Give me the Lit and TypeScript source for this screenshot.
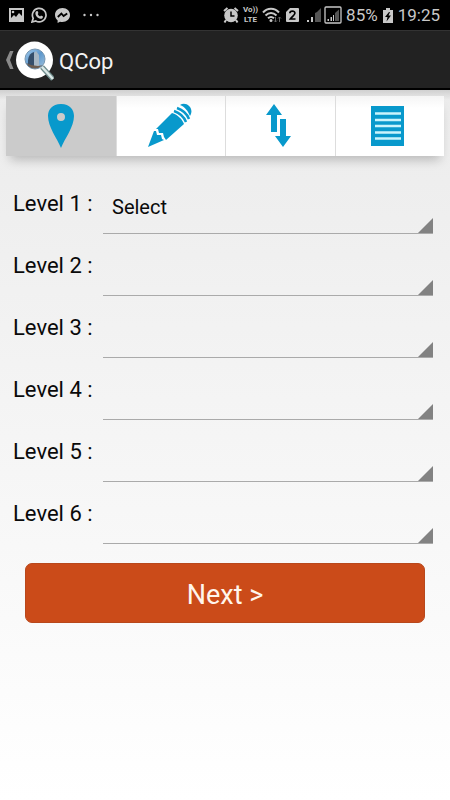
import { LitElement, html, css, svg } from "lit";
import { customElement, state } from "lit/decorators.js";
import { classMap } from "lit/directives/class-map.js";

@customElement("status-bar")
class StatusBar extends LitElement {
  static styles = css`
    :host {
      display: flex;
      align-items: center;
      justify-content: space-between;
      height: 30px;
      padding: 0 10px 0 8px;
      background: #000;
      color: #c8c8c8;
      font: 17px/30px Roboto, sans-serif;
    }
    .group { display: flex; align-items: center; gap: 4px; }
    .left { gap: 7px; }
    svg { display: block; flex: none; }
    .dots { margin-left: 4px; }
    .signal { margin-left: 3px; }
    .boxed { margin-left: -2px; }
    .network { font: bold 8px/10px Roboto, sans-serif; text-align: center; }
    .network span { display: block; }
  `;

  render() {
    return html`
      <div class="group left">
        <svg width="16" height="16" viewBox="0 0 16 16">
          <path fill="#c8c8c8" fill-rule="evenodd" d="M1 1H16V15H1ZM3 3V11L6 8L8 10L11 6L14 9V3Z" />
          <circle cx="5" cy="5" r="1.3" fill="#c8c8c8" />
        </svg>
        <svg width="16" height="16" viewBox="0 0 16 16">
          <path fill="none" stroke="#c8c8c8" stroke-width="1.7" d="M1 15L2.2 11.3A6.8 6.8 0 1 1 4.8 14Z" />
          <path fill="#c8c8c8" d="M5.4 4.2L6.6 4L7.4 6L6.7 7C7.2 8.2 8 8.9 9.1 9.4L10 8.5L12 9.5C12 11.2 10.8 12 9.5 11.8C6.5 11.3 4.4 8.6 4.4 6.2C4.4 5.4 4.7 4.6 5.4 4.2Z" />
        </svg>
        <svg width="17" height="17" viewBox="0 0 17 17">
          <path fill="#c8c8c8" d="M8.5 1C4 1 1 4.2 1 8C1 10.2 2 12 3.6 13.3V16L6 14.7C11.5 16 16 12.5 16 8C16 4.2 13 1 8.5 1Z" />
          <path fill="none" stroke="#000" stroke-width="1.8" d="M3.8 10L7.4 6.6L9.6 9L13.2 6.4" />
        </svg>
        <svg class="dots" width="18" height="16" viewBox="0 0 18 16" fill="#c8c8c8">
          <circle cx="2.5" cy="8" r="1.2" /><circle cx="9" cy="8" r="1.2" /><circle cx="15.5" cy="8" r="1.2" />
        </svg>
      </div>
      <div class="group">
        <svg width="16" height="17" viewBox="0 0 16 17">
          <circle cx="8" cy="8.5" r="6.8" fill="#c8c8c8" />
          <path fill="none" stroke="#c8c8c8" stroke-width="2" d="M1 4L4.5 1M11.5 1L15 4M3 13L1.5 15.5M13 13L14.5 15.5" />
          <path fill="none" stroke="#000" stroke-width="1.5" d="M8 4.5V9H11.5" />
        </svg>
        <div class="network"><span>Vo))</span><span>LTE</span></div>
        <svg width="20" height="16" viewBox="0 0 20 16">
          <path fill="none" stroke="#c8c8c8" stroke-width="2" d="M1 5.5C5.5 .5 12.5 .5 17 5.5M3.5 8.5C7 5 11 5 14.5 8.5M6 11.3C8 9.5 10 9.5 12 11.3" />
          <circle cx="9" cy="13.5" r="1.5" fill="#c8c8c8" />
          <path fill="none" stroke="#666" d="M13.5 10V15M12 13.5L13.5 15L15 13.5M17.5 15V10M16 11.5L17.5 10L19 11.5" />
        </svg>
        <svg width="13" height="16" viewBox="0 0 13 16">
          <path fill="#c8c8c8" d="M4 1H12Q13 1 13 2V14Q13 15 12 15H1Q0 15 0 14V5Z" />
          <path fill="none" stroke="#000" stroke-width="1.7" d="M3.8 6.3C4 3.3 9 3.5 8.9 6.2C8.8 8 6 9.5 4.3 12H9.5" />
        </svg>
        <svg class="signal" width="16" height="16" viewBox="0 0 16 16">
          <path fill="#c8c8c8" d="M1 13H3V15H1ZM5 10H7V15H5Z" />
          <path fill="#555" d="M9 6L11 5V15H9ZM11 5L15 1V15H11Z" />
        </svg>
        <svg class="boxed" width="18" height="18" viewBox="0 0 18 18">
          <rect x="1" y="1" width="16" height="16" rx="1" fill="none" stroke="#c8c8c8" stroke-width="1.3" />
          <path fill="#c8c8c8" d="M3.5 13H5V15H3.500ZM6.500 11H8V15H6.500Z M9 9H10V15H9Z" />
          <path fill="#555" d="M11 7L15 3.500V15H11Z" />
        </svg>
        <span>85%</span>
        <svg width="12" height="17" viewBox="0 0 12 17">
          <path fill="#c8c8c8" d="M4 1H8V3H11V16H1V3H4Z" />
          <path fill="#000" d="M7 5L3 10H5.500L4.500 14.500L9 8.500H6.500L8 5Z" />
        </svg>
        <span>19:25</span>
      </div>
    `;
  }
}

@customElement("title-bar")
class TitleBar extends LitElement {
  static styles = css`
    :host {
      display: flex;
      align-items: center;
      height: 60px;
      box-sizing: border-box;
      padding-left: 5px;
      background: #222;
      border-top: 1px solid #333;
      border-bottom: 2px solid #000;
      color: #f3f3f3;
      font-family: Roboto, sans-serif;
    }
    .home {
      display: flex;
      align-items: center;
      padding: 0;
      border: 0;
      background: none;
    }
    h1 { margin: 4px 0 0 5px; font-size: 22px; line-height: 30px; font-weight: 400; }
  `;

  render() {
    return html`
      <button class="home" aria-label="Back">
        <svg width="9" height="20" viewBox="0 0 9 20">
          <path fill="#8a8a8a" d="M5 1H8.500L5 10L8.500 19H5L1 10Z" />
        </svg>
        <svg width="40" height="42" viewBox="0 0 40 42">
          <defs>
            <linearGradient id="glass" x1="0" y1="0" x2="1" y2="1">
              <stop offset="0" stop-color="#a5cbed" /><stop offset=".5" stop-color="#5d98cd" /><stop offset="1" stop-color="#a4c4de" />
            </linearGradient>
            <clipPath id="lens"><circle cx="21" cy="20" r="9.500" /></clipPath>
          </defs>
          <circle cx="20.500" cy="21" r="18.500" fill="#fff" />
          <path stroke="#6f8c8c" stroke-width="5" d="M28 28L39 40" />
          <path stroke="#dce9e8" stroke-width="2.500" d="M28 28L39 40" />
          <circle cx="21" cy="20" r="10" fill="url(#glass)" stroke="#7696b1" />
          <g clip-path="url(#lens)">
            <path fill="#354e6b" d="M14 29V21Q15 14 20 13L21 29Z" />
            <path fill="#a7b7c5" d="M20 29V14L22 12L25 16V29Z" />
            <path fill="#6c5c50" d="M10 23L17 26L24 27L30 26V31H10Z" />
          </g>
        </svg>
      </button>
      <h1>QCop</h1>
    `;
  }
}

const tabs = [
  { label: "Location", icon: svg`<path fill="#0899cc" fill-rule="evenodd" d="M22 2C13 2 9 8 9 14C9 25 18 36 22 46C26 36 35 25 35 14C35 8 31 2 22 2ZM22 11A4 4 0 1 1 22 19A4 4 0 1 1 22 11Z" />` },
  { label: "Edit", icon: svg`
      <path fill="#0899cc" d="M0 45L6 29L8 29L9 33L13 33L14 37L16 38Z" />
      <path fill="#0899cc" d="M8 27L24 11C30 13 34 17 36 22L18 38L16 35L15 31L11 31L10 27Z" />
      <path fill="none" stroke="#0899cc" stroke-width="2.500" d="M26 9C32 11 36 15 38 20M29 6C35 8 39 12 41 17" />
      <path fill="#0899cc" d="M32 3C38 -1 47 6 42 14C40 9 37 5 32 3Z" />` },
  { label: "Transfer", icon: svg`<path fill="#0899cc" d="M16 2L24 13H19V30H13V13H8ZM22 17H28V34H33L25 45L17 34H22Z" />` },
  { label: "Report", icon: svg`
      <path fill="#0899cc" d="M4 4H37V44H4Z" />
      <path stroke="#c9f4fc" stroke-width="2.500" d="M8 11.500H34M8 18H34M8 24H34M8 30.500H34M8 36.500H34" />` },
];

@customElement("tab-strip")
class TabStrip extends LitElement {
  @state() private active = 0;

  static styles = css`
    :host {
      display: block;
      padding: 6px 6px 0;
      background: linear-gradient(#d0d0d0, transparent 10px);
    }
    nav {
      display: grid;
      grid-template-columns: repeat(4, 1fr);
      box-shadow: 0 8px 10px -4px rgba(0, 0, 0, .22);
    }
    button {
      display: flex;
      justify-content: center;
      align-items: center;
      height: 60px;
      padding: 0;
      border: 0;
      background: linear-gradient(#f5f5f5, #fff 20%);
    }
    button + button { box-shadow: inset 1px 0 #ddd; }
    button.active { background: #cbcbcb; }
  `;

  render() {
    return html`<nav>
      ${tabs.map((tab, i) => html`
        <button class=${classMap({ active: i === this.active })} aria-label=${tab.label} @click=${() => (this.active = i)}>
          <svg width="44" height="48" viewBox="0 0 44 48">${tab.icon}</svg>
        </button>`)}
    </nav>`;
  }
}

@customElement("app-root")
class AppRoot extends LitElement {
  static styles = css`
    :host {
      display: block;
      min-height: 100vh;
      background: linear-gradient(#e9e9e9, #fff);
      color: #0a0a0a;
      font-family: Roboto, sans-serif;
    }
    form { padding: 16px 17px 0 13px; }
    .row {
      display: grid;
      grid-template: 62px / 90px 1fr;
    }
    label { font-size: 22px; line-height: 64px; white-space: nowrap; }
    .field {
      position: relative;
      border-bottom: 1px solid #aaa;
    }
    .field::after {
      content: "";
      position: absolute;
      right: 0;
      bottom: 0;
      width: 15px;
      height: 15px;
      background: #828282;
      clip-path: polygon(100% 0, 100% 100%, 0 100%);
      pointer-events: none;
    }
    select {
      appearance: none;
      width: 100%;
      height: 61px;
      padding: 8px 20px 0 9px;
      border: 0;
      background: none;
      color: inherit;
      font: 20px/24px Roboto, sans-serif;
    }
    .next {
      display: block;
      width: calc(100% - 20px);
      height: 60px;
      margin: 19px 8px 0 12px;
      padding-top: 4px;
      border: 1px solid #b8481c;
      border-radius: 7px;
      background: #cb4b19;
      color: #fff5ec;
      font: 27px/32px Roboto, sans-serif;
    }
  `;

  render() {
    return html`
      <status-bar></status-bar>
      <title-bar></title-bar>
      <tab-strip></tab-strip>
      <form @submit=${(e: Event) => e.preventDefault()}>
        ${[1, 2, 3, 4, 5, 6].map((n) => html`
          <div class="row">
            <label for="level-${n}">Level ${n} :</label>
            <div class="field">
              <select id="level-${n}"><option>${n === 1 ? "Select" : ""}</option></select>
            </div>
          </div>`)}
        <button class="next">Next &gt;</button>
      </form>
    `;
  }
}
